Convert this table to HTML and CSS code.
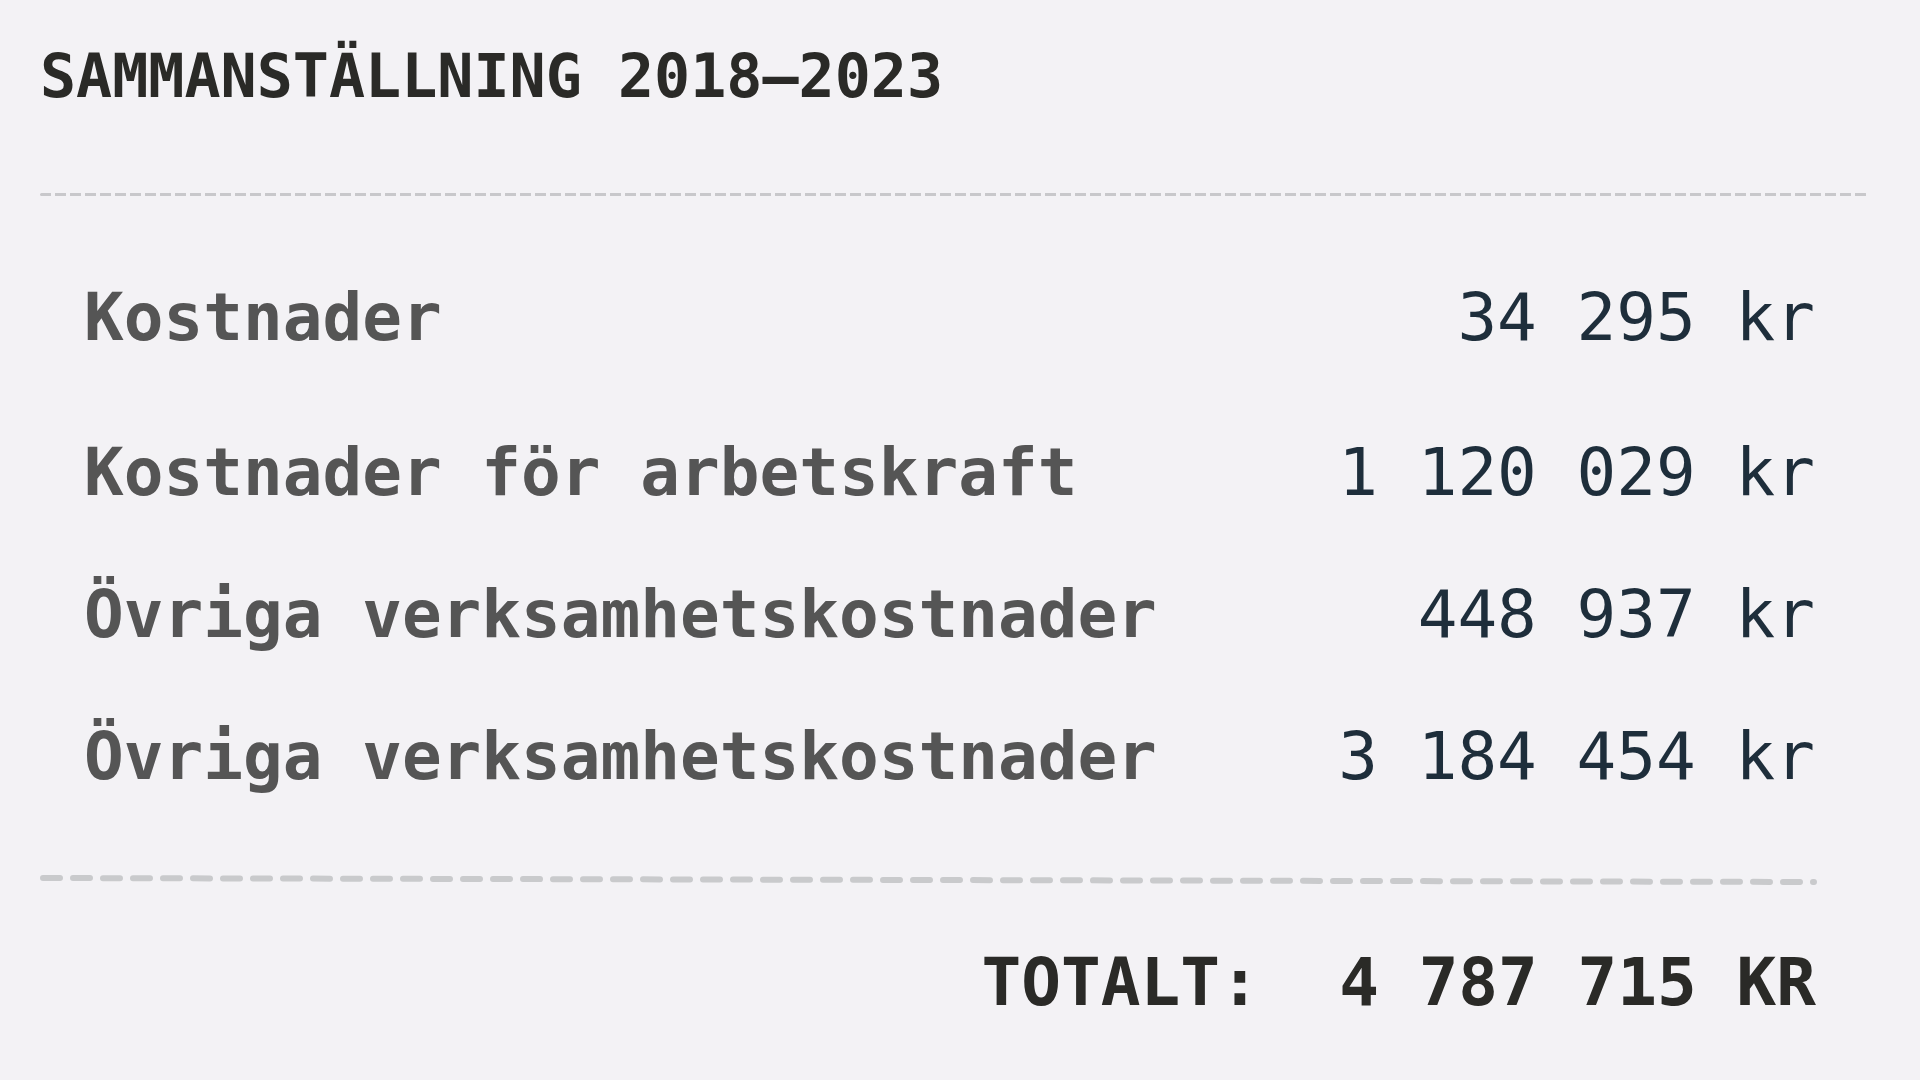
FILE: index.html
```html
<!DOCTYPE html>
<html>
<head>
<meta charset="UTF-8">
<title>Sammanställning 2018–2023</title>
<link rel="stylesheet" href="styles.css">
</head>
<body>

<h1 class="title">SAMMANSTÄLLNING 2018–2023</h1>
<div class="rule-thin"></div>

<ul class="rows">
	<li class="row first"><span class="label">Kostnader</span><span class="amount">34 295 kr</span></li>
	<li class="row"><span class="label">Kostnader för arbetskraft</span><span class="amount">1 120 029 kr</span></li>
	<li class="row"><span class="label">Övriga verksamhetskostnader</span><span class="amount">448 937 kr</span></li>
	<li class="row"><span class="label">Övriga verksamhetskostnader</span><span class="amount">3 184 454 kr</span></li>
</ul>

<svg class="rule-thick" width="1780" height="12" viewBox="0 0 1780 12">
	<line x1="3" y1="5" x2="1774" y2="9" stroke="#c9cacc" stroke-width="6" stroke-linecap="round" stroke-dasharray="17 13"/>
</svg>

<p class="total">TOTALT:&nbsp; 4 787 715 KR</p>

</body>
</html>
```

FILE: styles.css
```css
* {font-family: "DejaVu Sans Mono", "Liberation Mono", monospace}

body {
	margin: 0;
	padding: 46px 53px 0 40px;
	background: #f3f2f5;
}

h1.title {
	margin: 0;
	font-size: 60px;
	line-height: 60px;
	font-weight: bold;
	color: #2a2a27;
}

div.rule-thin {
	height: 3px;
	margin-top: 87px;
	background: repeating-linear-gradient(90deg, #c8c8cb 0 11px, transparent 11px 15px);
	border-radius: 2px;
}

ul.rows {
	list-style: none;
	margin: 51px 52px 0 0;
	padding: 0 0 0 44px;
}

li.row {
	display: flex;
	justify-content: space-between;
	font-size: 66px;
	line-height: 142px;
	white-space: pre;
}

li.row.first {margin-bottom: 13px}

span.label {
	font-weight: bold;
	color: #555555;
}

span.amount {color: #1e2e3b}

svg.rule-thick {
	display: block;
	margin-top: 45px;
}

p.total {
	margin: 65px 51px 0 0;
	text-align: right;
	font-size: 66px;
	line-height: 66px;
	font-weight: bold;
	color: #2a2a27;
}
```
